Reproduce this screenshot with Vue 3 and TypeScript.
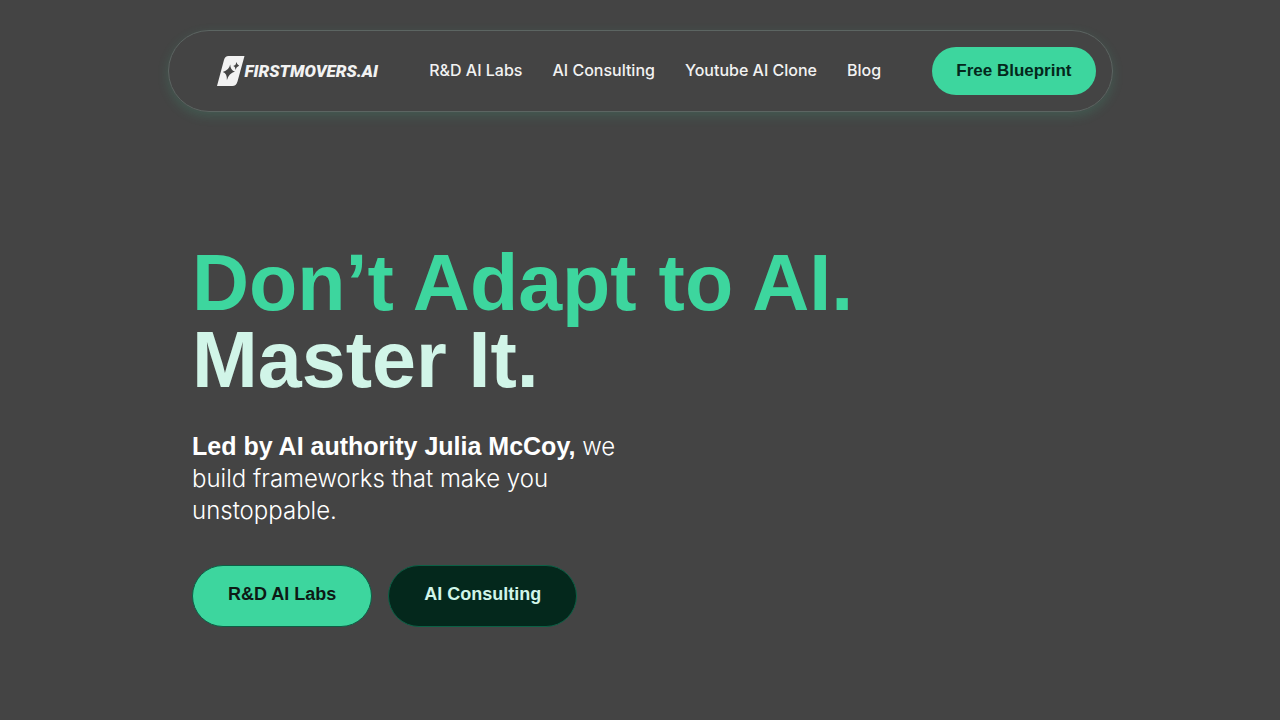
<script setup lang="ts">
interface NavLink {
  label: string
  href: string
}

const links: NavLink[] = [
  { label: 'R&D AI Labs', href: '#labs' },
  { label: 'AI Consulting', href: '#consulting' },
  { label: 'Youtube AI Clone', href: '#clone' },
  { label: 'Blog', href: '#blog' },
]
</script>

<template>
  <div class="page">
    <header class="bar">
      <a class="logo" href="#home">
        <svg class="mark" viewBox="0 0 28 30" width="28" height="30" aria-hidden="true">
          <path
            fill="#f2f2f2"
            fill-rule="evenodd"
            d="M11.500 0H27.500L20.500 25.500Q19.200 30 15.300 30H0L6.900 4.200Q8.100 0 11.500 0ZM13.200 8.600Q12 14.500 5.800 15.900Q10.300 17.200 9.900 24.200Q11.900 17.300 18 15.600Q13.400 14.600 13.200 8.600ZM19.600 6Q19.200 9.100 16.200 10Q18.500 10.700 18.400 14Q19.300 10.700 22.200 9.700Q19.800 9 19.600 6Z"
          />
        </svg>
        <span class="wordmark">FIRSTMOVERS.AI</span>
      </a>
      <nav class="links" aria-label="Main">
        <a v-for="link in links" :key="link.href" :href="link.href">{{ link.label }}</a>
      </nav>
      <a class="pill blueprint" href="#blueprint">Free Blueprint</a>
    </header>

    <main class="hero">
      <h1><span class="accent">Don’t Adapt to AI.</span><br />Master It.</h1>
      <p><strong>Led by AI authority Julia McCoy,</strong> we build frameworks that make you unstoppable.</p>
      <div class="actions">
        <a class="pill primary" href="#labs">R&amp;D AI Labs</a>
        <a class="pill secondary" href="#consulting">AI Consulting</a>
      </div>
    </main>
  </div>
</template>

<style>
body {
  margin: 0;
  background: #444;
}
</style>

<style scoped>
.page {
  box-sizing: border-box;
  min-height: 100vh;
  padding: 30px 24px;
  background: #444;
  font-family: 'Liberation Sans', Arial, sans-serif;
}

a {
  text-decoration: none;
}

.bar {
  box-sizing: border-box;
  display: flex;
  align-items: center;
  justify-content: space-between;
  max-width: 945px;
  margin: 0 auto;
  padding: 16px 16px 16px 48px;
  border: 1px solid #5c6562;
  border-radius: 48px;
  box-shadow: 0 4px 12px rgba(61, 214, 158, 0.16);
}

.logo {
  display: flex;
  align-items: center;
  color: #f2f2f2;
}

.mark {
  display: block;
}

.wordmark {
  font: italic 900 17px/24px Roboto, 'Liberation Sans', sans-serif;
}

.links {
  display: flex;
  gap: 30px;
  font: 500 16px/24px Inter, 'Liberation Sans', sans-serif;
  padding-bottom: 3px;
}

.links a {
  color: #f2f2f2;
}

.pill {
  display: block;
  border-radius: 32px;
  font-weight: bold;
  text-align: center;
  white-space: nowrap;
}

.blueprint {
  padding: 12px 24px;
  background: #3dd69e;
  color: #04281c;
  font-size: 17px;
  line-height: 24px;
}

.hero {
  max-width: 896px;
  margin: 0 auto;
  padding-top: 132px;
}

h1 {
  margin: 0;
  color: #d1f5e8;
  font-size: 79px;
  line-height: 77px;
}

.accent {
  color: #3dd69e;
}

p {
  max-width: 448px;
  margin: 32px 0 0;
  color: #fff;
  font: 300 24px/32px Inter, 'Liberation Sans', sans-serif;
}

strong {
  font: bold 25px/32px 'Liberation Sans', sans-serif;
}

.actions {
  display: flex;
  gap: 16px;
  margin-top: 38px;
}

.actions .pill {
  padding: 16px 35px 20px;
  border: 1px solid #0b6045;
  font-size: 18px;
  line-height: 24px;
}

.primary {
  background: #3dd69e;
  color: #0d1a15;
}

.secondary {
  background: #04281c;
  color: #d1f5e8;
}
</style>
